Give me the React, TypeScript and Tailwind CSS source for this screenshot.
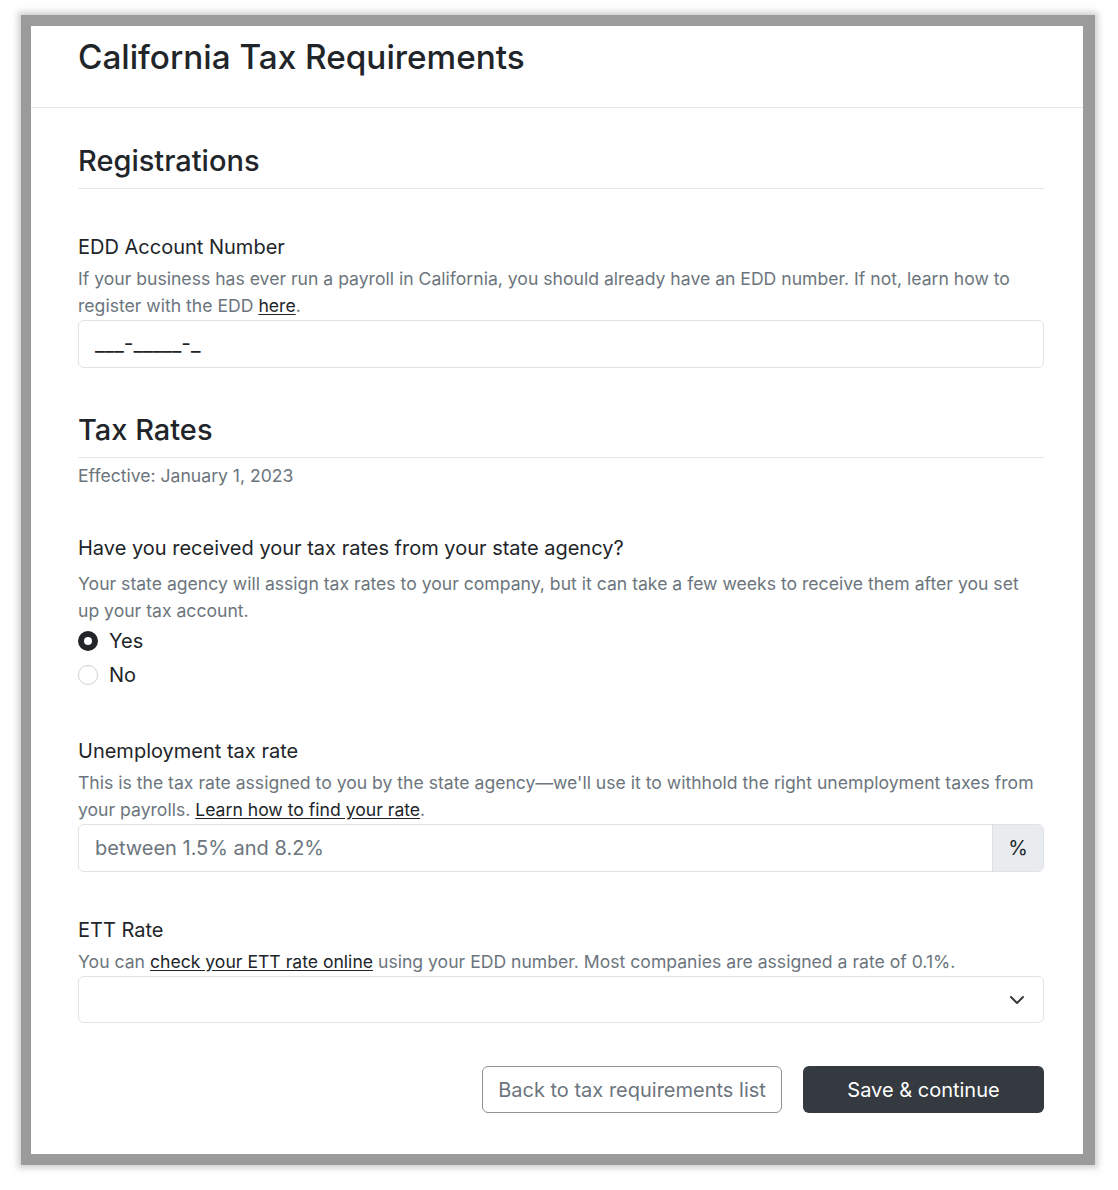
import React from "react";

const font = { fontFamily: "Inter, 'Liberation Sans', sans-serif" };

const Label: React.FC<{ children: React.ReactNode; className?: string }> = ({
  children,
  className = "",
}) => (
  <p className={`text-[20px] leading-[28px] text-[#212529] ${className}`}>
    {children}
  </p>
);

const Help: React.FC<{ children: React.ReactNode; className?: string }> = ({
  children,
  className = "",
}) => (
  <p className={`text-[17.6px] leading-[27px] text-[#6c757d] ${className}`}>
    {children}
  </p>
);

const Link: React.FC<{ children: React.ReactNode }> = ({ children }) => (
  <a href="#" className="text-[#212529] underline underline-offset-2">
    {children}
  </a>
);

const Radio: React.FC<{ label: string; checked?: boolean }> = ({
  label,
  checked,
}) => (
  <label className="flex items-center h-[34px] gap-[11px] cursor-pointer">
    {checked ? (
      <span className="w-[20px] h-[20px] rounded-full bg-[#212529] flex items-center justify-center">
        <span className="w-[8px] h-[8px] rounded-full bg-white" />
      </span>
    ) : (
      <span className="w-[20px] h-[20px] rounded-full border border-[#ced4da] bg-white" />
    )}
    <span className="text-[20px] text-[#212529]">{label}</span>
  </label>
);

export default function App() {
  return (
    <div className="min-h-screen bg-white pt-[15px] pl-[21px]" style={font}>
      <div className="w-[1074px] bg-[#9b9b9b] pt-[11px] pl-[10px] pr-[12px] pb-[11px] shadow-[0_0_6px_3px_rgba(160,160,160,0.5)]">
        <div className="bg-white">
          <div className="pl-[47px] pt-[11px] pb-[30px] border-b border-[#e6e6e6]">
            <h1 className="text-[33.3px] leading-[40px] font-medium text-[#212529]">
              California Tax Requirements
            </h1>
          </div>

          <div className="pl-[47px] pr-[39px] pt-[36px] pb-[41px]">
            <h2 className="text-[29px] leading-[34px] font-medium text-[#212529] pb-[10px] border-b border-[#e6e6e6]">
              Registrations
            </h2>

            <Label className="mt-[44px]">EDD Account Number</Label>
            <Help className="mt-[4px]">
              If your business has ever run a payroll in California, you should
              already have an EDD number. If not, learn how to register with the
              EDD <Link>here</Link>.
            </Help>
            <div className="mt-[1px] h-[48px] rounded-[6px] border border-[#dee2e6] flex items-center px-[16px] text-[21px] text-[#212529]">
              ___-_____-_
            </div>

            <h2 className="mt-[45px] text-[29px] leading-[34px] font-medium text-[#212529] pb-[10px] border-b border-[#e6e6e6]">
              Tax Rates
            </h2>
            <Help className="mt-[4px]">Effective: January 1, 2023</Help>

            <Label className="mt-[45px]">
              Have you received your tax rates from your state agency?
            </Label>
            <Help className="mt-[8px]">
              Your state agency will assign tax rates to your company, but it
              can take a few weeks to receive them after you set up your tax
              account.
            </Help>
            <div className="flex flex-col">
              <Radio label="Yes" checked />
              <Radio label="No" />
            </div>

            <Label className="mt-[45px]">Unemployment tax rate</Label>
            <Help className="mt-[4px]">
              This is the tax rate assigned to you by the state agency—we'll use
              it to withhold the right unemployment taxes from your payrolls.{" "}
              <Link>Learn how to find your rate</Link>.
            </Help>
            <div className="mt-[1px] h-[48px] rounded-[6px] border border-[#dee2e6] flex overflow-hidden">
              <div className="flex-1 flex items-center px-[16px] text-[20px] text-[#6c757d]">
                between 1.5% and 8.2%
              </div>
              <div className="w-[51px] bg-[#e9ecef] border-l border-[#dee2e6] flex items-center justify-center text-[20px] text-[#212529]">
                %
              </div>
            </div>

            <Label className="mt-[44px]">ETT Rate</Label>
            <Help className="mt-[4px]">
              You can <Link>check your ETT rate online</Link> using your EDD
              number. Most companies are assigned a rate of 0.1%.
            </Help>
            <div className="mt-[1px] h-[47px] rounded-[6px] border border-[#dee2e6] flex items-center justify-end pr-[18px]">
              <svg
                width="16"
                height="16"
                viewBox="0 0 16 16"
                fill="none"
                stroke="#343a40"
                strokeWidth="2"
                strokeLinecap="round"
                strokeLinejoin="round"
              >
                <path d="M2 5l6 6 6-6" />
              </svg>
            </div>

            <div className="mt-[43px] flex justify-end gap-[21px]">
              <button className="w-[300px] h-[47px] rounded-[6px] border border-[#8c9298] text-[20px] text-[#6c757d] bg-white">
                Back to tax requirements list
              </button>
              <button className="w-[241px] h-[47px] rounded-[6px] bg-[#343a40] text-[20px] text-white">
                Save &amp; continue
              </button>
            </div>
          </div>
        </div>
      </div>
    </div>
  );
}
